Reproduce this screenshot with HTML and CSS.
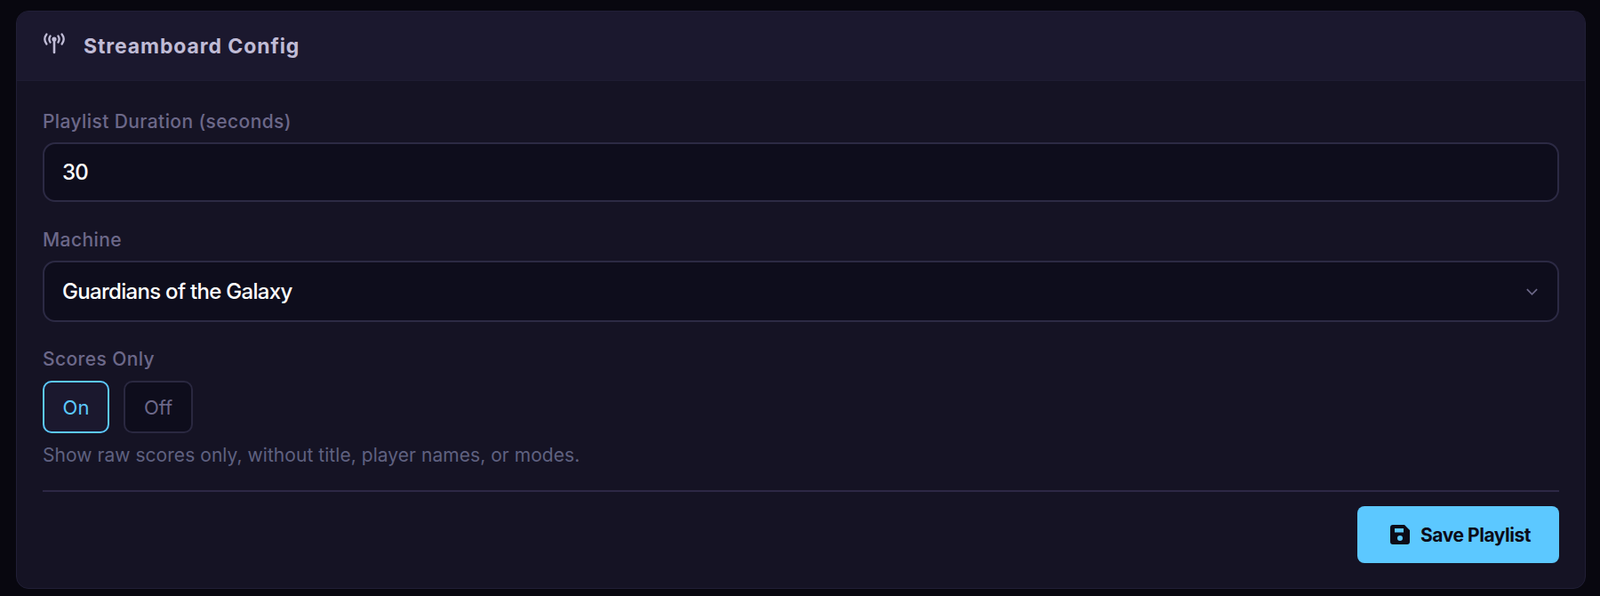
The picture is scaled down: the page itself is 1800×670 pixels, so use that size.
FILE: index.html
```html
<!DOCTYPE html>
<html lang="en">
<head>
    <meta charset="UTF-8">
    <title>Streamboard Config</title>
    <link rel="stylesheet" href="styles.css">
</head>
<body>
    <div class="card">
        <div class="card-header">
            <svg class="header-icon" viewBox="0 0 26 24" fill="none" stroke="currentColor" stroke-linecap="round" stroke-width="2.300">
                <path d="M13 8v14" stroke-width="2.600"/>
                <circle cx="13" cy="7" r="2.600" fill="currentColor" stroke="none"/>
                <path d="M8.600 3.400c-1.500 2.200-1.500 5 0 7.200M17.400 3.400c1.500 2.200 1.500 5 0 7.200"/>
                <path d="M4.400 1.500c-2.600 3.400-2.600 7.600 0 11M21.600 1.500c2.600 3.400 2.600 7.600 0 11"/>
            </svg>
            <h2>Streamboard Config</h2>
        </div>
        <div class="card-body">
            <label class="field-label">Playlist Duration (seconds)</label>
            <div class="input">30</div>
            <label class="field-label machine-label">Machine</label>
            <div class="input select">
                <span>Guardians of the Galaxy</span>
                <svg class="chevron" viewBox="0 0 16 10" fill="none" stroke="currentColor" stroke-width="1.800"><path d="M2 2l6 6 6-6"/></svg>
            </div>
            <label class="field-label scores-label">Scores Only</label>
            <div class="toggle-row">
                <button class="toggle active">On</button>
                <button class="toggle">Off</button>
            </div>
            <p class="help">Show raw scores only, without title, player names, or modes.</p>
            <div class="footer">
                <button class="save">
                    <svg class="save-icon" viewBox="0 0 22 22">
                        <path fill-rule="evenodd" fill="currentColor" d="M3 0h13l6 6v13a3 3 0 0 1-3 3H3a3 3 0 0 1-3-3V3a3 3 0 0 1 3-3zm2 4v4.500h10V4zm6 8a3 3 0 1 0 0 6 3 3 0 0 0 0-6z"/>
                    </svg>
                    Save Playlist
                </button>
            </div>
        </div>
    </div>
</body>
</html>
```

FILE: styles.css
```css
* {
    box-sizing: border-box;
}
body {
    margin: 0;
    padding: 12px 16px 8px 18px;
    height: 670px;
    overflow: hidden;
    background-color: #08070f;
    font-family: Inter, sans-serif;
}
.card {
    height: 650px;
    background-color: #151324;
    border: 1px solid #211f36;
    border-radius: 14px;
    overflow: hidden;
}
.card-header {
    display: flex;
    align-items: center;
    gap: 20px;
    height: 78px;
    padding: 0 29px;
    background-color: #1b182e;
    border-bottom: 1px solid #1f1d33;
    color: #c0bcd6;
}
.header-icon {
    width: 26px;
    height: 24px;
    margin-top: -6px;
}
.card-header h2 {
    margin: 0;
    font-size: 23px;
    font-weight: 700;
    letter-spacing: 0.9px;
}
.card-body {
    padding: 32px 29px 0;
}
.field-label {
    display: block;
    height: 26px;
    line-height: 27px;
    font-size: 21px;
    font-weight: 500;
    letter-spacing: 0.4px;
    color: #6c6889;
}
.machine-label {
    margin-top: 29px;
}
.scores-label {
    margin-top: 28px;
}
.input {
    display: flex;
    align-items: center;
    height: 67px;
    margin-top: 11px;
    padding: 0 20px;
    background-color: #0e0d1c;
    border: 2px solid #2c2a44;
    border-radius: 14px;
    color: #fff;
    font-size: 24px;
    font-weight: 500;
    letter-spacing: -0.7px;
}
.select {
    justify-content: space-between;
    height: 69px;
}
.chevron {
    width: 15px;
    height: 10px;
    margin-right: 1px;
    color: #6c6889;
}
.toggle-row {
    display: flex;
    gap: 16px;
    margin-top: 12px;
}
.toggle {
    width: 78px;
    height: 59px;
    background-color: #0e0d1c;
    border: 2px solid #2a2840;
    border-radius: 10px;
    color: #6c6889;
    font-family: inherit;
    font-size: 22px;
}
.toggle.active {
    width: 75px;
    background-color: #1b182e;
    border-color: #5cc8ff;
    color: #5cc8ff;
}
.help {
    margin: 12px 0 0;
    line-height: 26px;
    font-size: 21px;
    letter-spacing: 0.05px;
    color: #5f6180;
}
.footer {
    display: flex;
    justify-content: flex-end;
    margin-top: 26px;
    padding-top: 16px;
    border-top: 2px solid #2d2845;
}
.save {
    display: flex;
    align-items: center;
    justify-content: center;
    gap: 12px;
    width: 227px;
    height: 64px;
    padding-left: 11px;
    background-color: #5cc8ff;
    border: none;
    border-radius: 8px;
    color: #0c0b18;
    font-family: inherit;
    font-size: 21px;
    font-weight: 700;
    letter-spacing: -0.45px;
}
.save-icon {
    width: 22px;
    height: 22px;
}
```
